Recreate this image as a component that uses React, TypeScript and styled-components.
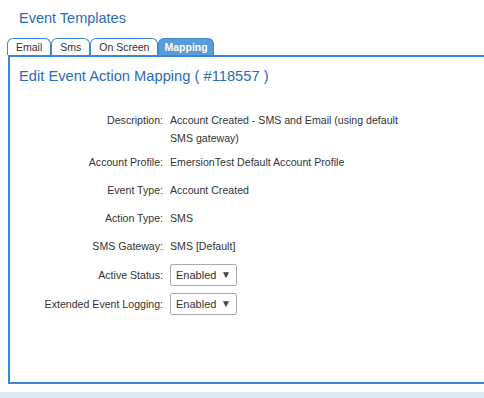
import * as React from 'react'
import styled, { createGlobalStyle } from 'styled-components'

const GlobalStyle = createGlobalStyle`
  html, body {
    margin: 0;
    padding: 0;
    background: #fff;
    overflow: hidden;
  }
  body {
    font-family: "Liberation Sans", Arial, sans-serif;
  }
`

const Page = styled.div`
  width: 484px;
  height: 398px;
  display: flex;
  flex-direction: column;
  overflow: hidden;
`

const Title = styled.h1`
  margin: 0;
  padding: 9px 0 0 19px;
  font-size: 14.5px;
  line-height: 18px;
  font-weight: normal;
  color: #2a6db5;
`

const TabBar = styled.div`
  display: flex;
  margin-top: 11px;
  padding-left: 7px;
`

const Tab = styled.div<{ $active?: boolean }>`
  height: 17px;
  box-sizing: border-box;
  padding: ${p => (p.$active ? '0 5px' : '0 8px')};
  border: 1px solid #3a87d4;
  border-bottom: none;
  border-radius: 6px 6px 0 0;
  font-size: 10.5px;
  line-height: 17px;
  color: ${p => (p.$active ? '#fff' : '#333')};
  font-weight: ${p => (p.$active ? 'bold' : 'normal')};
  background: ${p => (p.$active ? '#5b9bd8' : '#fff')};
`

const Panel = styled.div`
  width: 540px;
  height: 329px;
  box-sizing: border-box;
  margin-left: 8px;
  border: 2px solid #3a87d4;
  padding: 9px 0 0 9px;
`

const Heading = styled.h2`
  margin: 0;
  font-size: 14.7px;
  line-height: 20px;
  font-weight: normal;
  color: #2a6db5;
`

const Form = styled.div`
  display: grid;
  grid-template-columns: 144px 240px;
  column-gap: 7px;
  margin-top: 20px;
  font-size: 10.6px;
  color: #333;
`

const Label = styled.div<{ $tall?: boolean }>`
  text-align: right;
  line-height: 18px;
  padding: ${p => (p.$tall ? '5.5px 0' : '5px 0')};
`

const Value = styled.div`
  line-height: 18px;
  padding: 5px 0;
`

const Select = styled.div`
  display: inline-flex;
  align-items: center;
  justify-content: space-between;
  width: 67px;
  height: 22px;
  box-sizing: border-box;
  margin: 3.5px 0;
  padding: 0 5px 0 5px;
  border: 1px solid #aaa;
  border-radius: 2px;
  font-size: 11px;
  color: #333;
  background: #fff;
`

const Arrow = styled.span`
  font-size: 10px;
  color: #444;
`

const Footer = styled.div`
  margin-top: 8px;
  height: 6px;
  background: #dceaf7;
`

const rows: [string, string][] = [
  ['Account Profile:', 'EmersionTest Default Account Profile'],
  ['Event Type:', 'Account Created'],
  ['Action Type:', 'SMS'],
  ['SMS Gateway:', 'SMS [Default]'],
]

const selects = ['Active Status:', 'Extended Event Logging:']

const App = () => (
  <Page>
    <GlobalStyle />
    <Title>Event Templates</Title>
    <TabBar>
      <Tab>Email</Tab>
      <Tab>Sms</Tab>
      <Tab>On Screen</Tab>
      <Tab $active>Mapping</Tab>
    </TabBar>
    <Panel>
      <Heading>Edit Event Action Mapping ( #118557 )</Heading>
      <Form>
        <Label style={{ padding: '4.5px 0 1.5px' }}>Description:</Label>
        <Value style={{ padding: '4.5px 0 1.5px' }}>
          Account Created - SMS and Email (using default SMS gateway)
        </Value>
        {rows.map(([label, value]) => (
          <React.Fragment key={label}>
            <Label>{label}</Label>
            <Value>{value}</Value>
          </React.Fragment>
        ))}
        {selects.map(label => (
          <React.Fragment key={label}>
            <Label $tall>{label}</Label>
            <div>
              <Select>
                Enabled <Arrow>▼</Arrow>
              </Select>
            </div>
          </React.Fragment>
        ))}
      </Form>
    </Panel>
    <Footer />
  </Page>
)

export default App
